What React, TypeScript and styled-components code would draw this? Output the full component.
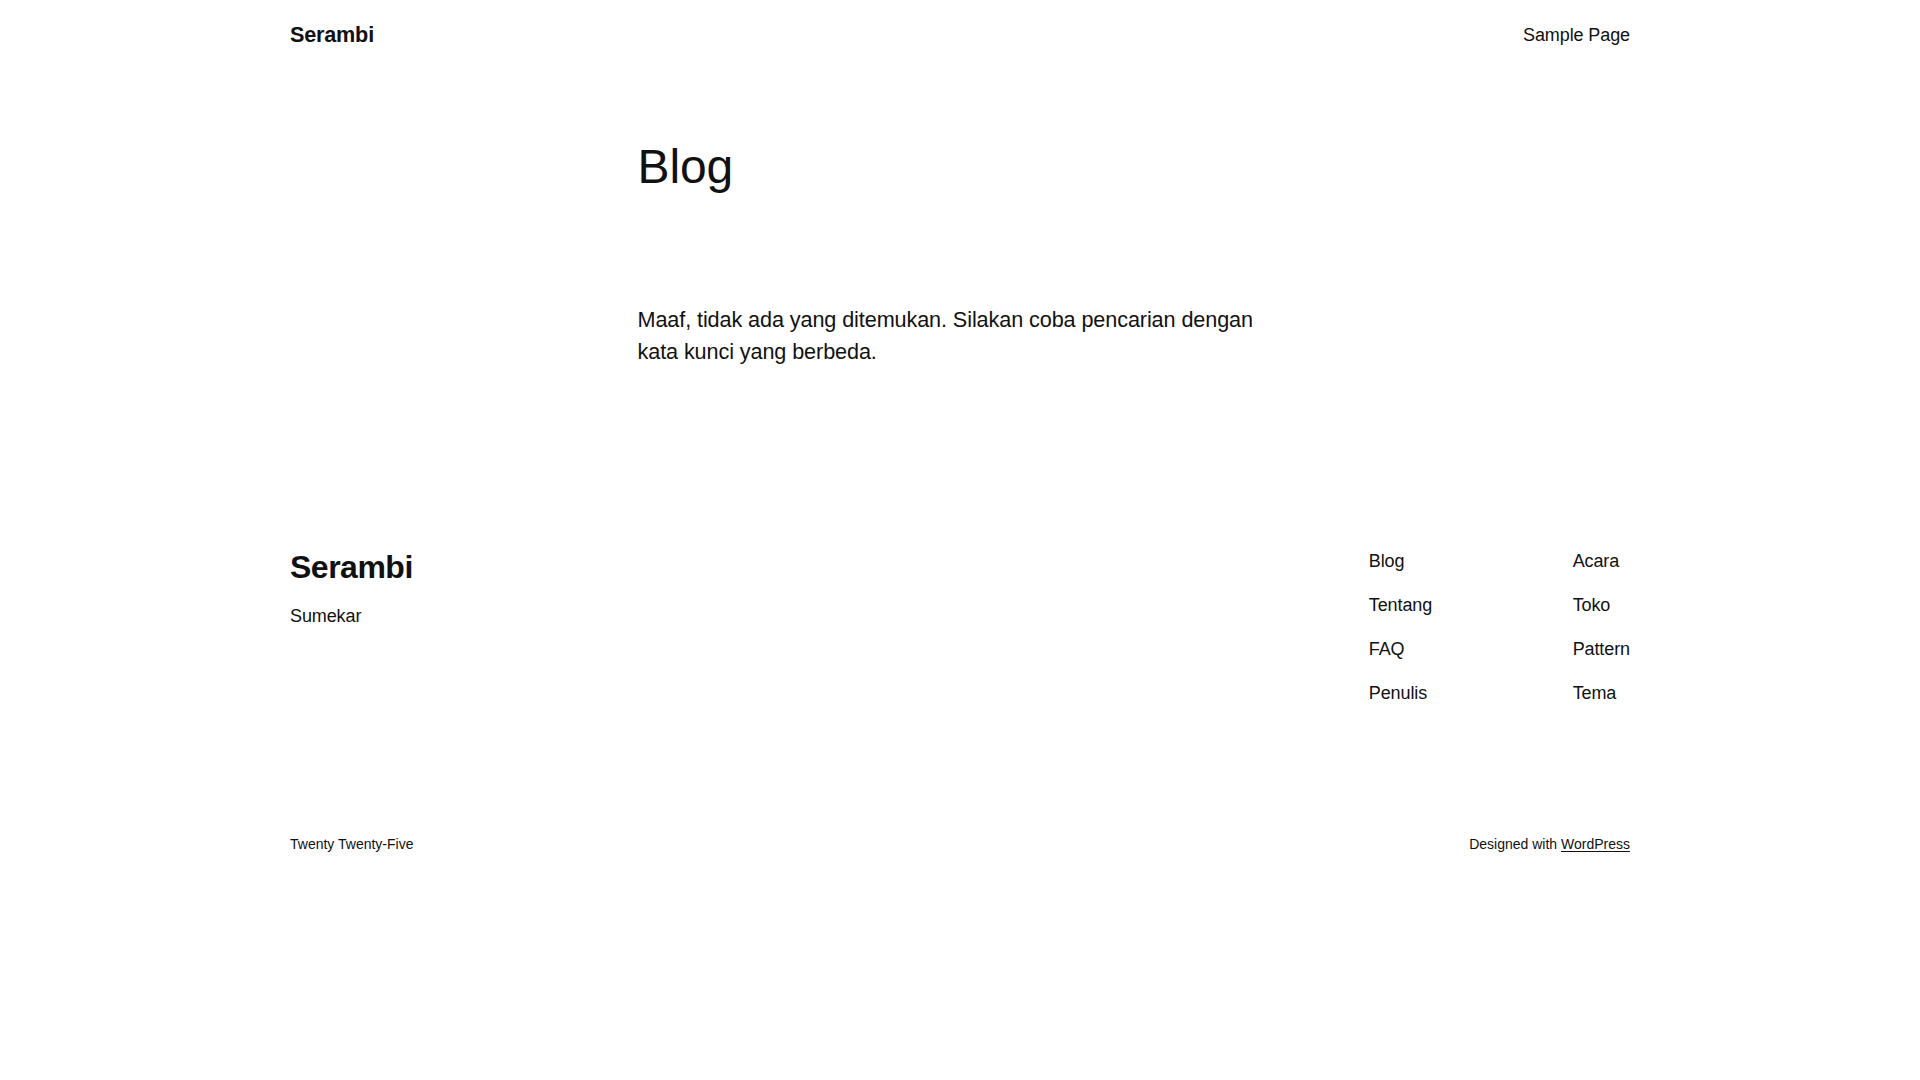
import React from "react";
import styled, { createGlobalStyle } from "styled-components";

const GlobalStyle = createGlobalStyle`
  html, body { margin: 0; padding: 0; background: #ffffff; }
  body {
    font-family: "Liberation Sans", Arial, Helvetica, sans-serif;
    color: #111111;
    letter-spacing: -0.1px;
    -webkit-font-smoothing: antialiased;
  }
  a { color: inherit; text-decoration: none; }
`;

const Page = styled.div`
  display: flex;
  flex-direction: column;
  min-height: 1080px;
`;

const Wide = styled.div`
  width: 1340px;
  margin: 0 auto;
`;

const Header = styled(Wide)`
  display: flex;
  justify-content: space-between;
  align-items: center;
  padding: 20px 0 18px;
`;

const SiteTitle = styled.a<{ $size: number }>`
  font-size: ${(p) => p.$size}px;
  font-weight: 700;
  line-height: 1.4;
  letter-spacing: ${(p) => (p.$size > 25 ? "-0.5px" : "-0.2px")};
`;

const NavLink = styled.a`
  font-size: 18px;
  line-height: 1.4;
`;

const Main = styled.main`
  width: 645px;
  margin: 0 auto;
  padding-top: 72px;
`;

const Title = styled.h1`
  margin: 0;
  font-size: 48px;
  font-weight: 400;
  line-height: 1.125;
  letter-spacing: -0.1px;
`;

const Message = styled.p`
  margin: 110px 0 0;
  font-size: 21.63px;
  line-height: 31.8px;
`;

const Footer = styled(Wide)`
  margin-top: 177px;
  display: flex;
  flex-direction: column;
`;

const FooterTop = styled.div`
  display: flex;
  justify-content: space-between;
  align-items: flex-start;
`;

const Brand = styled.div`
  display: flex;
  flex-direction: column;
  gap: 14px;
`;

const Tagline = styled.p`
  margin: 0;
  font-size: 18px;
  line-height: 1.4;
`;

const NavColumns = styled.nav`
  display: flex;
  gap: 140.5px;
  padding-top: 4.2px;
`;

const NavColumn = styled.ul`
  list-style: none;
  margin: 0;
  padding: 0;
  display: flex;
  flex-direction: column;
  gap: 18.9px;
`;

const NavItem = styled.li`
  font-size: 18px;
  line-height: 25.2px;
`;

const FooterBottom = styled.div`
  margin-top: 128.2px;
  display: flex;
  justify-content: space-between;
  align-items: center;
  font-size: 14px;
  line-height: 1.4;
  letter-spacing: 0;
`;

const Underlined = styled.a`
  text-decoration: underline;
  text-underline-offset: 2px;
  text-decoration-thickness: 1px;
`;

const col1 = ["Blog", "Tentang", "FAQ", "Penulis"];
const col2 = ["Acara", "Toko", "Pattern", "Tema"];

export default function App() {
  return (
    <>
      <GlobalStyle />
      <Page>
        <Header as="header">
          <SiteTitle $size={21.63} href="#">Serambi</SiteTitle>
          <NavLink href="#">Sample Page</NavLink>
        </Header>
        <Main>
          <Title>Blog</Title>
          <Message>
            Maaf, tidak ada yang ditemukan. Silakan coba pencarian dengan kata
            kunci yang berbeda.
          </Message>
        </Main>
        <Footer as="footer">
          <FooterTop>
            <Brand>
              <SiteTitle $size={32} href="#">Serambi</SiteTitle>
              <Tagline>Sumekar</Tagline>
            </Brand>
            <NavColumns>
              <NavColumn>
                {col1.map((t) => (
                  <NavItem key={t}>
                    <a href="#">{t}</a>
                  </NavItem>
                ))}
              </NavColumn>
              <NavColumn>
                {col2.map((t) => (
                  <NavItem key={t}>
                    <a href="#">{t}</a>
                  </NavItem>
                ))}
              </NavColumn>
            </NavColumns>
          </FooterTop>
          <FooterBottom>
            <span>Twenty Twenty-Five</span>
            <span>
              Designed with <Underlined href="#">WordPress</Underlined>
            </span>
          </FooterBottom>
        </Footer>
      </Page>
    </>
  );
}
